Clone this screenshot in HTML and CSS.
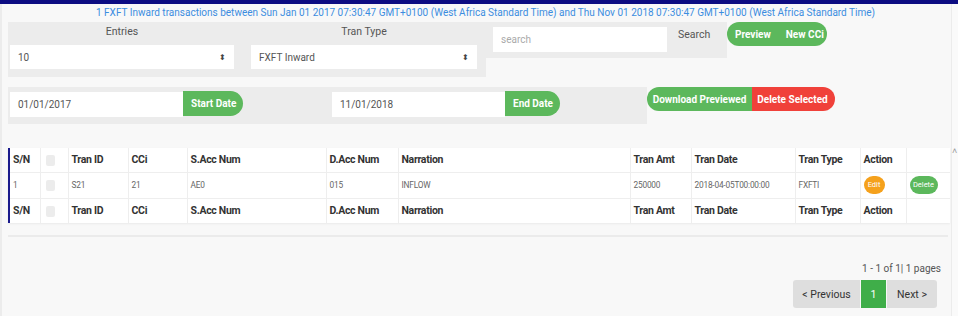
FILE: index.html
```html
<!DOCTYPE html>
<html>
<head>
<meta charset="utf-8">
<link rel="stylesheet" href="styles.css">
</head>
<body>
<div class="topbar"></div>
<div class="shell">
  <div class="page">
    <p class="title">1 FXFT Inward transactions between Sun Jan 01 2017 07:30:47 GMT+0100 (West Africa Standard Time) and Thu Nov 01 2018 07:30:47 GMT+0100 (West Africa Standard Time)</p>
    <div class="row1">
      <div class="panel filters">
        <div class="field">
          <label>Entries</label>
          <div class="select"><span>10</span><span class="caret">&#x2B0D;</span></div>
        </div>
        <div class="field">
          <label>Tran Type</label>
          <div class="select"><span>FXFT Inward</span><span class="caret">&#x2B0D;</span></div>
        </div>
      </div>
      <div class="panel searchp">
        <div class="input search-in">search</div>
        <span class="search-lbl">Search</span>
      </div>
      <div class="pill">
        <span class="btn green">Preview</span><span class="btn green">New CCi</span>
      </div>
    </div>
    <div class="row2">
      <div class="panel dates">
        <div class="dgroup"><div class="input date-in">01/01/2017</div><span class="btn green dbtn">Start Date</span></div>
        <div class="dgroup"><div class="input date-in">11/01/2018</div><span class="btn green dbtn">End Date</span></div>
      </div>
      <div class="pill">
        <span class="btn green">Download Previewed</span><span class="btn red">Delete Selected</span>
      </div>
    </div>
    <div class="tablewrap">
      <table>
        <colgroup>
          <col class="c1"><col class="c2"><col class="c3"><col class="c4"><col class="c5"><col class="c6"><col class="c7"><col class="c8"><col class="c9"><col class="c10"><col class="c11"><col class="c12">
        </colgroup>
        <thead>
          <tr><th>S/N</th><th><span class="chk"></span></th><th>Tran ID</th><th>CCi</th><th>S.Acc Num</th><th>D.Acc Num</th><th>Narration</th><th>Tran Amt</th><th>Tran Date</th><th>Tran Type</th><th>Action</th><th></th></tr>
        </thead>
        <tbody>
          <tr><td>1</td><td><span class="chk"></span></td><td>S21</td><td>21</td><td>AE0</td><td>015</td><td>INFLOW</td><td>250000</td><td>2018-04-05T00:00:00</td><td>FXFTI</td><td><span class="mini orange">Edit</span></td><td><span class="mini green">Delete</span></td></tr>
        </tbody>
        <tfoot>
          <tr><th>S/N</th><th><span class="chk"></span></th><th>Tran ID</th><th>CCi</th><th>S.Acc Num</th><th>D.Acc Num</th><th>Narration</th><th>Tran Amt</th><th>Tran Date</th><th>Tran Type</th><th>Action</th><th></th></tr>
        </tfoot>
      </table>
    </div>
    <div class="divider"></div>
    <div class="pager">
      <div class="pinfo">1 - 1 of 1| 1 pages</div>
      <div class="pbtns"><span class="pb">&lt; Previous</span><span class="pb cur">1</span><span class="pb">Next &gt;</span></div>
    </div>
  </div>
  <div class="scroll"><span class="arrow">&#x2C4;</span></div>
</div>
</body>
</html>
```
FILE: styles.css
```css
* { box-sizing: border-box; }
html, body { margin: 0; padding: 0; }
body {
  width: 958px; height: 316px; overflow: hidden;
  background: #f8f8f8;
  font-family: Roboto, "Liberation Sans", sans-serif;
  color: #555;
}
.topbar { height: 4px; background: #0c0c82; }
.shell { display: flex; height: 312px; border-left: 2px solid #ececec; }
.page { width: 949px; padding-left: 6px; }
.scroll { flex: 1; border-left: 1px solid #ececec; position: relative; background: #fafafa; }
.arrow { position: absolute; top: 142px; left: 0px; font-size: 9px; color: #999; }
.title {
  margin: 0; height: 18px; line-height: 18px;
  text-align: center; font-size: 10px; color: #3b8de0; padding-left: 12px;
}
.row1 { display: flex; align-items: flex-start; height: 55px; }
.panel { background: #ececec; }
.filters {
  width: 478px; height: 55px; display: grid;
  grid-template-columns: 224px 226px; column-gap: 17px; padding: 0 0 0 2px;
}
.field label { display: block; text-align: center; font-size: 10.5px; height: 23px; line-height: 20px; color: #555; }
.select {
  height: 24px; background: #fff; display: flex; justify-content: space-between; align-items: center;
  padding: 0 8px 0 8px; font-size: 10px; color: #555;
}
.caret { font-size: 8px; color: #444; }
.searchp { width: 241px; height: 36px; display: flex; align-items: flex-start; padding: 5px 0 0 7px; }
.input { background: #fff; font-size: 10px; color: #555; display: flex; align-items: center; padding-left: 8px; }
.search-in { width: 174px; height: 25px; color: #aaa; }
.search-lbl { font-size: 10.5px; margin-left: 11px; margin-top: 1px; color: #555; }
.pill { display: flex; border-radius: 12px; overflow: hidden; height: 24px; }
.btn { display: flex; align-items: center; padding: 0 7px; font-size: 10px; font-weight: 700; color: #fff; white-space: nowrap; }
.green { background: #5cb85c; }
.red { background: #f0413a; }
.row1 .pill { width: 100px; }
.row1 .pill .btn { padding: 0 7px 0 8px; }
.row2 { display: flex; align-items: flex-start; margin-top: 10px; height: 37px; }
.dates { width: 639px; height: 37px; display: grid; grid-template-columns: 322px 1fr; padding: 5px 0 0 2px; }
.dgroup { display: flex; align-items: flex-start; }
.date-in { width: 173px; height: 25px; }
.dbtn { height: 25px; margin-top: -1px; border-radius: 0 13px 13px 0; padding: 0 7px 0 8px; }
.row2 .pill { margin-left: 0; }
.row2 .pill .btn:first-child { width: 105px; justify-content: center; }
.row2 .pill .btn:last-child { width: 83px; justify-content: center; padding: 0 2px 0 0; }
.tablewrap { margin-top: 24px; width: 942px; background: #fff; border-left: 2px solid #1a1a8c; box-shadow: 0 1px 2px rgba(0,0,0,0.06); }
table { width: 940px; border-collapse: collapse; table-layout: fixed; }
col.c1 { width: 30px; } col.c2 { width: 28px; } col.c3 { width: 60px; } col.c4 { width: 59px; }
col.c5 { width: 139px; } col.c6 { width: 72px; } col.c7 { width: 232px; } col.c8 { width: 61px; }
col.c9 { width: 104px; } col.c10 { width: 65px; } col.c11 { width: 46px; } col.c12 { width: 44px; }
th, td { border-left: 1px solid #eee; border-top: 1px solid #eee; text-align: left; padding: 0 0 0 3px; white-space: nowrap; }
tr > :first-child { border-left: none; }
thead tr > * { border-top: none; }
th { height: 24px; font-size: 10.5px; letter-spacing: -0.3px; font-weight: 700; color: #333; }
td { height: 26px; font-size: 8.3px; letter-spacing: -0.2px; color: #666; }
tfoot th { height: 25px; }
.chk { display: inline-block; width: 9px; height: 11px; background: #ececec; border-radius: 2px; margin-left: 2px; vertical-align: middle; }
.mini { display: inline-block; font-size: 7.5px; letter-spacing: 0; color: #fff; border-radius: 9px; line-height: 18px; text-align: center; }
.orange { background: #f5a11c; width: 21px; }
.mini.green { width: 28px; }
.divider { margin-top: 12px; width: 940px; height: 2px; background: #ebebeb; }
.pager { width: 934px; display: flex; flex-direction: column; align-items: flex-end; }
.pinfo { margin-top: 24px; font-size: 10px; color: #555; height: 16px; line-height: 16px; margin-right: 1px; }
.pbtns { display: flex; margin-top: 3px; margin-right: 5px; }
.pb { background: #dedede; height: 28px; display: flex; align-items: center; justify-content: center; font-size: 10.5px; color: #333; white-space: nowrap; }
.pb:first-child { border-radius: 3px 0 0 3px; width: 67px; }
.pb.cur { background: #3fae49; color: #fff; width: 25px; margin: 0 1px; }
.pb:last-child { border-radius: 0 3px 3px 0; width: 50px; }
```
